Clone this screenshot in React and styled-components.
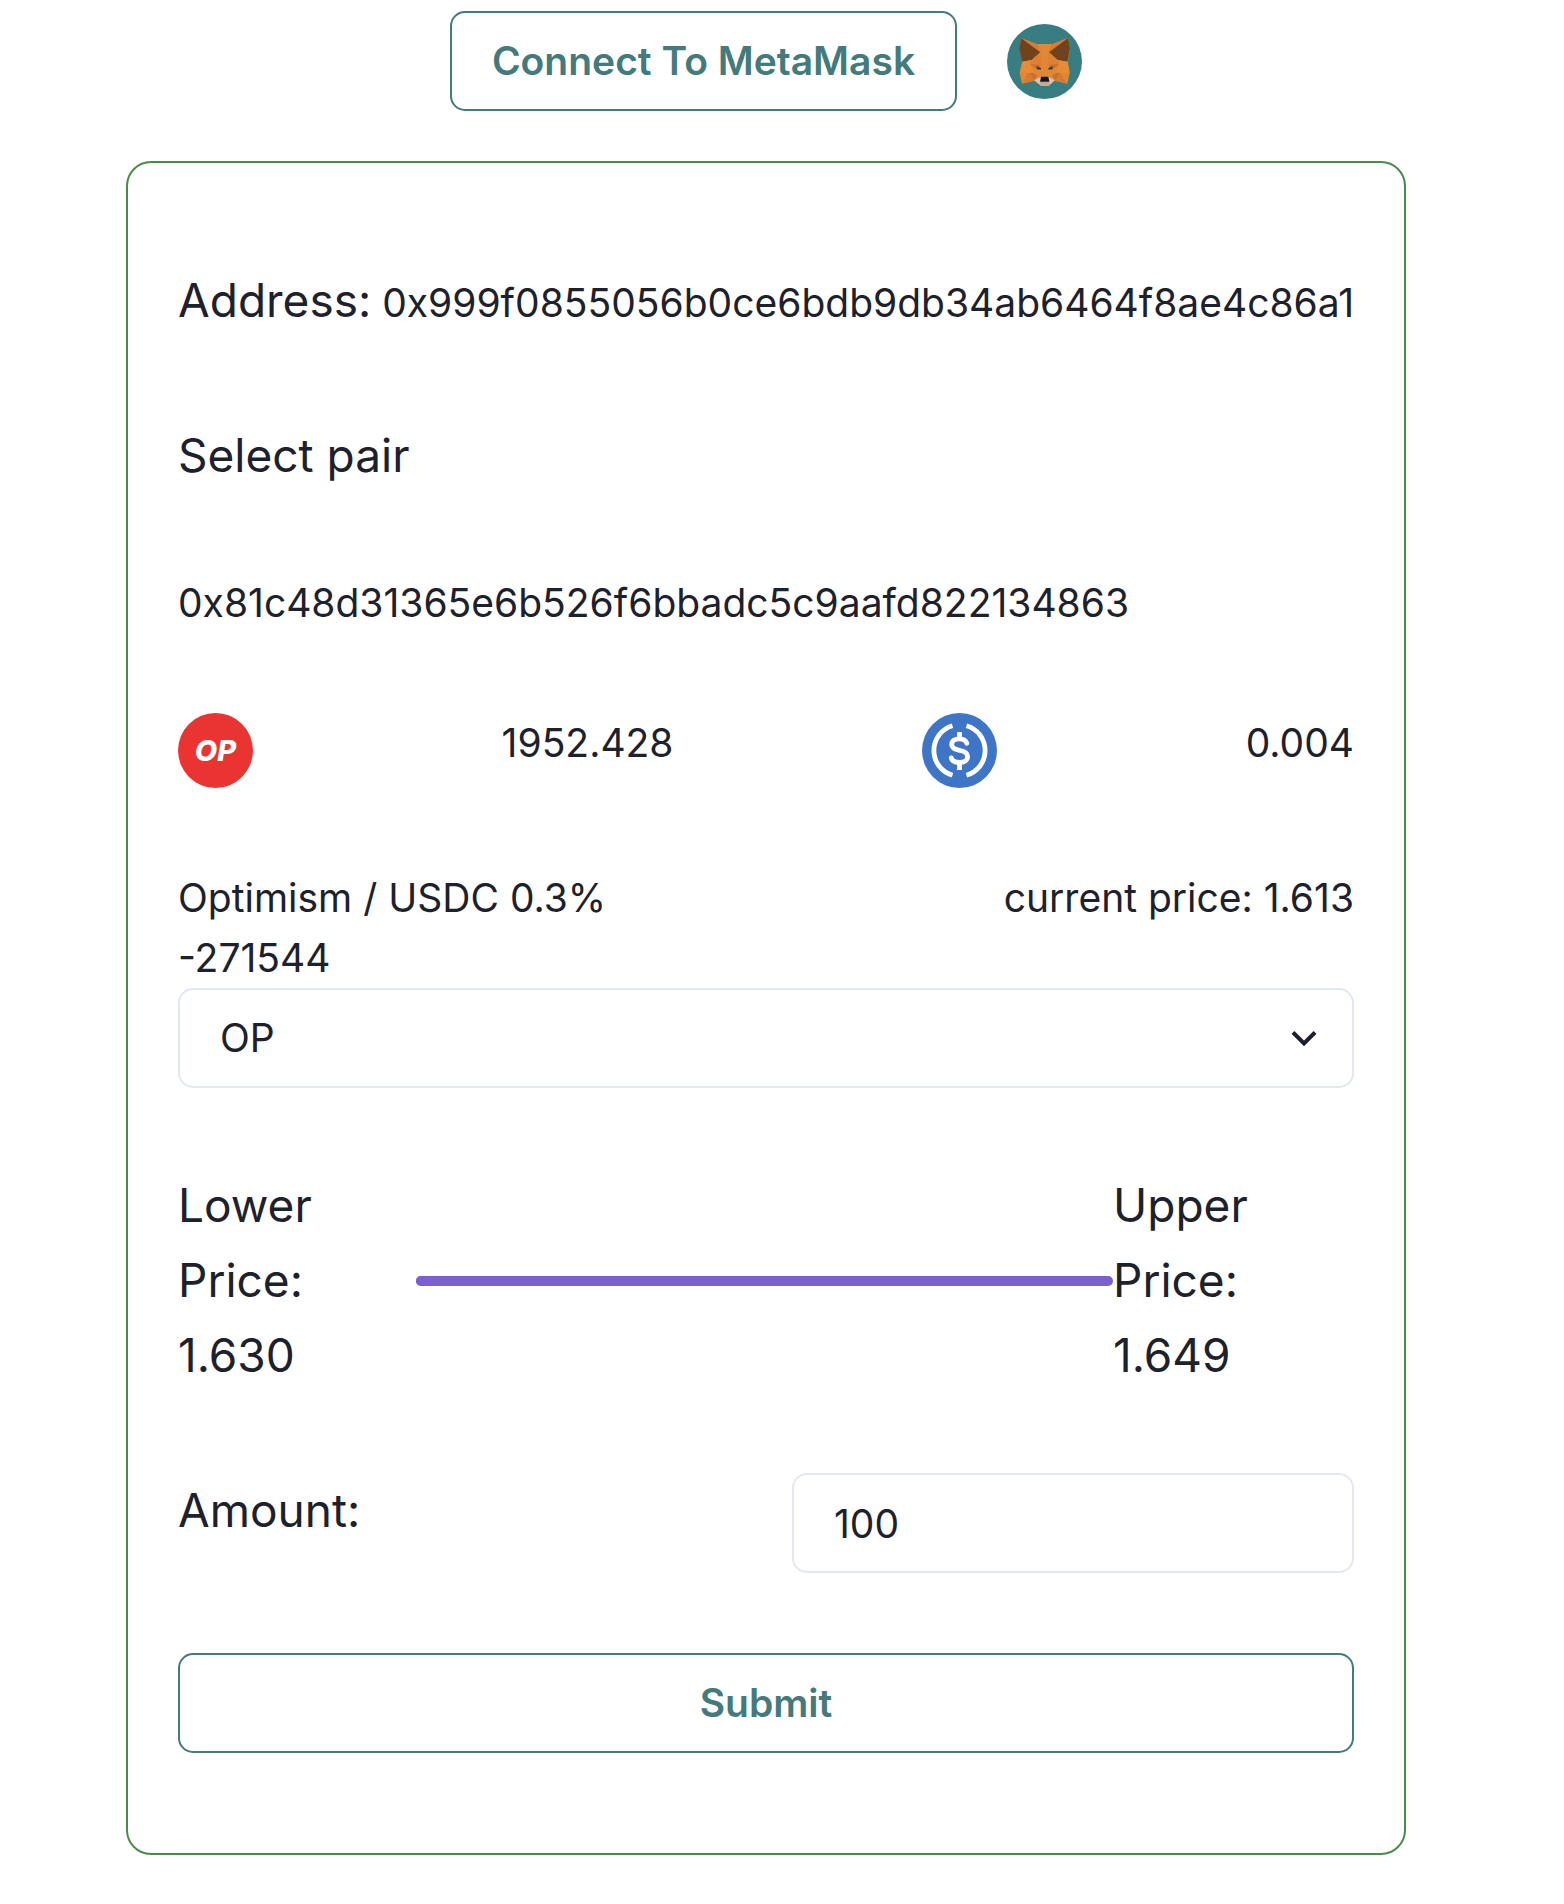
import React, { useState } from "react";
import styled, { createGlobalStyle } from "styled-components";

const GlobalStyle = createGlobalStyle`
  *, *::before, *::after { box-sizing: border-box; }
  body {
    margin: 0;
    background: #ffffff;
    color: #1c212b;
    font-family: Inter, "Liberation Sans", sans-serif;
    font-size: 39px;
    line-height: 60px;
  }
  button, input, select { font: inherit; color: inherit; }
`;

const Page = styled.main`
  display: flex;
  flex-direction: column;
  align-items: center;
  gap: 50px;
  padding: 11px 32px 49px 0;
`;

const WalletBar = styled.header`
  display: flex;
  align-items: center;
  gap: 50px;
`;

const OutlineButton = styled.button`
  width: ${(p) => (p.$block ? "100%" : "auto")};
  height: 100px;
  padding: 0 40px;
  border: 2px solid #437a7b;
  border-radius: 15px;
  background: transparent;
  color: #437a7b;
  font-weight: 600;
  cursor: pointer;
`;

const Card = styled.form`
  display: flex;
  flex-direction: column;
  gap: 80px;
  width: 100%;
  max-width: 1280px;
  padding: 100px 50px;
  border: 2px solid #488b4b;
  border-radius: 25px;
`;

const Row = styled.div`
  display: flex;
  justify-content: space-between;
  align-items: ${(p) => p.$align || "flex-start"};
`;

const Line = styled.p`
  margin: 0;
`;

const Title = styled.span`
  font-size: 46px;
  line-height: 75px;
`;

const FieldLabel = styled.label`
  font-size: 46px;
  line-height: 75px;
`;

const Token = styled.svg`
  display: block;
  flex: none;
  width: 75px;
  height: 75px;
`;

const OpToken = styled.span`
  display: flex;
  flex: none;
  align-items: center;
  justify-content: center;
  width: 75px;
  height: 75px;
  border-radius: 50%;
  background: #ea3431;
  color: #ffffff;
  font-size: 29px;
  font-style: italic;
  font-weight: 800;
`;

const SelectBox = styled.div`
  position: relative;
`;

const Select = styled.select`
  display: block;
  width: 100%;
  height: 100px;
  padding: 0 80px 0 40px;
  border: 2px solid #e2e8f0;
  border-radius: 15px;
  background: transparent;
  appearance: none;
`;

const Chevron = styled.svg`
  position: absolute;
  top: 25px;
  right: 25px;
  width: 50px;
  height: 50px;
  pointer-events: none;
`;

const PriceRange = styled.div`
  display: grid;
  grid-template-columns: 238px 1fr 241px;
  align-items: center;
`;

const PriceLabel = styled(FieldLabel)`
  padding-right: 60px;
`;

const Range = styled.input`
  width: 100%;
  height: 10px;
  margin: 0;
  border-radius: 5px;
  background: #7c60cd;
  appearance: none;

  &::-webkit-slider-thumb {
    width: 10px;
    height: 10px;
    border-radius: 5px;
    background: #7c60cd;
    appearance: none;
  }
`;

const AmountInput = styled.input`
  width: 562px;
  height: 100px;
  padding: 0 40px;
  border: 2px solid #e2e8f0;
  border-radius: 15px;
  background: transparent;
`;

function MetaMaskIcon() {
  return (
    <Token viewBox="48 42 225 225" role="img" aria-label="MetaMask">
      <circle cx="160.5" cy="154.5" r="112.5" fill="#377d82" />
      <path d="M91 85 L137 102 H184 L231 84 L237 116 L230 154 L236 188 L229 221 L191 212 L173 227 H150 L130 212 L93 221 L86 189 L94 154 L84 115Z" fill="#e18633" />
      <path d="M91 85 L137 102 L148 126Z M231 84 L184 102 L174 126Z" fill="#d67c34" />
      <path d="M91 85 L148 127 L122 150 L94 155 L84 115Z M231 84 L174 127 L200 150 L229 155 L237 115Z" fill="#70431f" />
      <path d="M94 155 L122 150 L117 163 L129 188 L86 190Z M229 155 L200 150 L206 163 L194 188 L236 189Z" fill="#e78b36" />
      <path d="M117 161 L145 163 L150 178 L139 181Z M205 161 L177 163 L172 178 L183 181Z" fill="#c87132" />
      <path d="M148 127 L153 167 L145 164 L117 161 L122 150Z M174 127 L169 167 L177 164 L205 161 L200 150Z" fill="#dd8033" />
      <path d="M129 188 L112 189 L93 221 L130 212Z M194 188 L208 189 L229 221 L191 212Z" fill="#d77a34" />
      <path d="M117 188 L139 195 L129 210Z M206 188 L183 195 L193 210Z" fill="#c56f31" />
      <path d="M137 168 L150 175 L149 179 L138 177Z M185 168 L172 175 L173 179 L184 177Z" fill="#303b45" />
      <path d="M130 211 L147 202 H175 L191 211 L173 227 H150Z" fill="#d8c4b5" />
      <path d="M146 215 H176 L173 227 H150Z" fill="#bba99b" />
      <path d="M150 200 H172 L175 215 H147Z" fill="#15171a" />
    </Token>
  );
}

function UsdcIcon() {
  return (
    <Token viewBox="-37.5 -37.5 75 75" role="img" aria-label="USDC">
      <circle r="37.5" fill="#3e75c6" />
      <g fill="none" stroke="#ffffff" strokeWidth="4.8">
        <path d="M-7 -24.7 A25.7 25.7 0 0 0 -7 24.7" />
        <path d="M7 -24.7 A25.7 25.7 0 0 1 7 24.7" />
        <path d="M0 -18.5 V-12 M0 12 V19.5" />
        <path strokeLinecap="round" d="M7.3 -7.2 C6.3 -10.4 3.8 -11.7 0 -11.7 C-4.8 -11.7 -7.8 -9.6 -7.8 -6 C-7.8 -2.2 -4.4 -1 0 -0.2 C5 0.6 8.1 2 8.1 6 C8.1 9.8 4.6 12 0 12 C-4.6 12 -7.4 10.6 -8.2 7.4" />
      </g>
    </Token>
  );
}

export default function App() {
  const [token, setToken] = useState("OP");
  const [amount, setAmount] = useState("100");
  const [price, setPrice] = useState(0);

  return (
    <>
      <GlobalStyle />
      <Page>
        <WalletBar>
          <OutlineButton type="button">Connect To MetaMask</OutlineButton>
          <MetaMaskIcon />
        </WalletBar>

        <Card onSubmit={(e) => e.preventDefault()}>
          <Row $align="baseline">
            <Title>Address:</Title>
            <span>0x999f0855056b0ce6bdb9db34ab6464f8ae4c86a1</span>
          </Row>

          <Title>Select pair</Title>

          <Line>0x81c48d31365e6b526f6bbadc5c9aafd822134863</Line>

          <Row>
            <OpToken>OP</OpToken>
            <span>1952.428</span>
            <UsdcIcon />
            <span>0.004</span>
          </Row>

          <div>
            <Row>
              <span>Optimism / USDC 0.3%</span>
              <span>current price: 1.613</span>
            </Row>
            <Line>-271544</Line>
            <SelectBox>
              <Select aria-label="Token" value={token} onChange={(e) => setToken(e.target.value)}>
                <option>OP</option>
                <option>USDC</option>
              </Select>
              <Chevron viewBox="0 0 24 24" aria-hidden="true">
                <path d="M16.59 8.59L12 13.17 7.41 8.59 6 10l6 6 6-6z" fill="#1c212b" />
              </Chevron>
            </SelectBox>
          </div>

          <PriceRange>
            <PriceLabel htmlFor="price">Lower Price: 1.630</PriceLabel>
            <Range id="price" type="range" value={price} onChange={(e) => setPrice(e.target.value)} />
            <PriceLabel htmlFor="price">Upper Price: 1.649</PriceLabel>
          </PriceRange>

          <Row>
            <FieldLabel htmlFor="amount">Amount:</FieldLabel>
            <AmountInput id="amount" type="text" inputMode="decimal" value={amount} onChange={(e) => setAmount(e.target.value)} />
          </Row>

          <OutlineButton type="submit" $block>Submit</OutlineButton>
        </Card>
      </Page>
    </>
  );
}
